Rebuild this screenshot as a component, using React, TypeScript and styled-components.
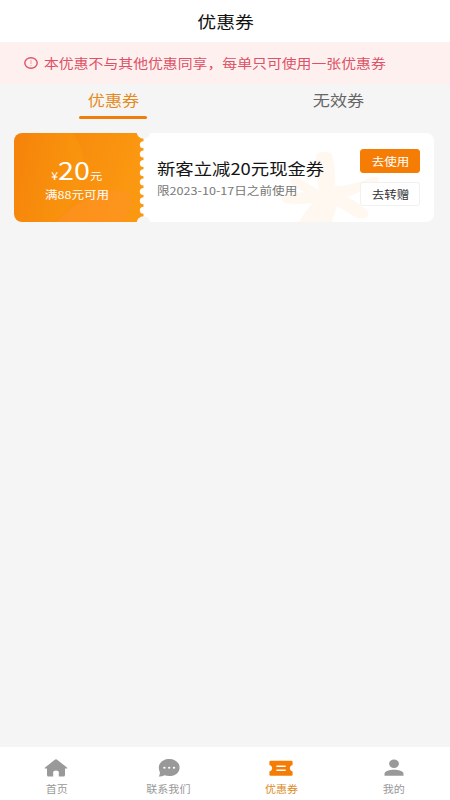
import React from 'react';
import styled, { createGlobalStyle } from 'styled-components';

const GlobalStyle = createGlobalStyle`
  * { box-sizing: border-box; }
  body { margin: 0; background: #f5f5f5; }
  button { font: inherit; cursor: pointer; }
`;

const Screen = styled.div`
  height: 800px;
  display: flex;
  flex-direction: column;
  background: #f5f5f5;
  font-family: 'Noto Sans CJK SC', sans-serif;
  overflow: hidden;
`;

/* Wide-set lettering shared by all labels */
const Label = styled.span<{ $stretch?: number; $origin?: string }>`
  display: inline-block;
  white-space: nowrap;
  transform: scaleX(${(p) => p.$stretch ?? 1.14});
  transform-origin: ${(p) => p.$origin ?? 'center'} center;
`;

const Header = styled.header`
  height: 42px;
  flex: none;
  display: flex;
  align-items: center;
  justify-content: center;
  background: #fff;
  color: #111;
  font-size: 16.4px;
  line-height: 24px;
  padding-left: 1px;
`;

const Notice = styled.div`
  height: 42px;
  flex: none;
  display: flex;
  align-items: center;
  gap: 6px;
  padding-left: 24px;
  background: #fff0f0;
  color: #dd5266;
  font-size: 13px;
  line-height: 20px;

  svg { flex: none; margin-bottom: 1px; }
`;

const Tabs = styled.nav`
  height: 48.5px;
  flex: none;
  display: grid;
  grid-template-columns: 1fr 1fr;
  justify-items: center;
  align-items: start;
`;

const Tab = styled.div<{ $active?: boolean }>`
  width: 68px;
  margin-left: 1px;
  padding-top: 4px;
  text-align: center;
  font-size: 15px;
  line-height: 24px;
  color: ${(p) => (p.$active ? '#e58a1c' : '#666')};

  span { margin-left: 1px; }

  &::after {
    content: '';
    display: block;
    height: 3px;
    margin-top: 3.5px;
    border-radius: 2px;
    background: ${(p) => (p.$active ? '#f07e0c' : 'transparent')};
  }
`;

const Card = styled.article`
  display: flex;
  height: 89px;
  margin: 0 16px 0 14px;
  border-radius: 8px;
  overflow: hidden;
  background: #fff;
`;

const Stub = styled.div`
  position: relative;
  z-index: 1;
  width: 130px;
  flex: none;
  display: flex;
  flex-direction: column;
  align-items: center;
  padding: 23.5px 4px 0 0;
  color: #fff;
`;

const StubArt = styled.svg`
  position: absolute;
  inset: 0;
  overflow: visible;
`;

const Price = styled.div`
  height: 28px;
  display: flex;
  align-items: baseline;
  line-height: 28px;
`;

const Amount = styled.span`
  font-size: 24.5px;
`;

const Unit = styled.span`
  font-size: 10.5px;
`;

const Condition = styled.div`
  position: relative;
  margin-top: 2px;
  font-size: 11px;
  line-height: 16px;
`;

const Body = styled.div`
  position: relative;
  flex: 1;
  display: flex;
  justify-content: space-between;
  padding: 16px 14px 0 13px;
`;

const Watermark = styled.svg`
  position: absolute;
  left: 131px;
  top: 0;
`;

const Info = styled.div`
  position: relative;
  display: flex;
  flex-direction: column;
  align-items: flex-start;
  padding-top: 7.5px;
`;

const CouponTitle = styled.div`
  font-size: 16px;
  line-height: 24px;
  color: #151515;
`;

const Expiry = styled.div`
  font-size: 11px;
  line-height: 16px;
  margin-top: 1.5px;
  color: #777;
`;

const Actions = styled.div`
  position: relative;
  display: flex;
  flex-direction: column;
  gap: 9px;
`;

const ActionButton = styled.button<{ $primary?: boolean }>`
  width: 60px;
  height: 24px;
  padding: 0;
  border-radius: 3px;
  border: 1px solid ${(p) => (p.$primary ? '#f57d05' : '#f1f1f1')};
  background: ${(p) => (p.$primary ? '#f57d05' : '#fff')};
  color: ${(p) => (p.$primary ? '#fff' : '#333')};
  font-size: 11px;
  line-height: 22px;
`;

const BottomBar = styled.footer`
  height: 53px;
  flex: none;
  margin-top: auto;
  display: grid;
  grid-template-columns: repeat(4, 1fr);
  background: #fff;
`;

const NavItem = styled.a<{ $active?: boolean }>`
  display: flex;
  flex-direction: column;
  align-items: center;
  padding-top: 12px;
  color: ${(p) => (p.$active ? '#f57d05' : '#999')};
  font-size: 9.7px;
  line-height: 14px;

  svg { display: block; margin-bottom: 3px; }
  span { color: ${(p) => (p.$active ? '#dc8b25' : '#999')}; }
`;

const BITES = Array.from({ length: 8 }, (_, i) => 11.7 + i * 9.35);

const StubBackground = () => (
  <StubArt width="130" height="89" viewBox="0 0 130 89">
    <defs>
      <linearGradient id="stub" x1="0" y1="0" x2="1" y2="0.25">
        <stop offset="0" stopColor="#f5820a" />
        <stop offset="1" stopColor="#fb9811" />
      </linearGradient>
      <linearGradient id="arc" x1="0" y1="0" x2="1" y2="0">
        <stop offset="0" stopColor="#f8930a" stopOpacity="0" />
        <stop offset="1" stopColor="#fa990d" stopOpacity=".6" />
      </linearGradient>
    </defs>
    <rect width="129.5" height="89" fill="url(#stub)" />
    <path d="M0 0H59Q72 20 69 42Q62 75 38 89H0Z" fill="url(#arc)" />
    <path d="M42 89Q60 68 90 59Q105 55 116 62Q122 75 108 89Z" fill="#ff9128" opacity=".5" />
    {BITES.map((y) => (
      <ellipse key={y} cx="129.6" cy={y} rx="3.8" ry="3.5" fill="#fff" />
    ))}
    <circle cx="129.5" cy="-1" r="6.8" fill="#f5f5f5" />
    <circle cx="129.5" cy="90" r="6.8" fill="#f5f5f5" />
  </StubArt>
);

const AlertIcon = () => (
  <svg width="14" height="12" viewBox="0 0 14 12" fill="none" stroke="#dd5266">
    <ellipse cx="7" cy="6" rx="6.2" ry="5.2" strokeWidth="1.4" />
    <path d="M7 3V7M7 8V9" strokeWidth="1" opacity=".5" />
  </svg>
);

const HomeIcon = () => (
  <svg width="24" height="20" viewBox="0 0 24 20" fill="currentColor">
    <path d="M11.2 .6Q12 0 12.8 .6L23 8.4Q24 9.6 22.5 9.6H21V16Q21 17.5 19.4 17.5H14.8V13Q14.8 11.4 12 11.4T9.2 13V17.5H4.6Q3 17.5 3 16V9.6H1.5Q0 9.6 1 8.4Z" />
  </svg>
);

const ChatIcon = () => (
  <svg width="24" height="20" viewBox="0 0 24 20">
    <path d="M12.3 0C18.3 0 22.6 3.8 22.6 8.7S18.3 17 12.3 17Q9.7 17 7.6 16.2Q5.2 17.6 1.7 17.5Q3 16 2.9 13.2Q1.8 11.2 1.8 8.7C1.8 3.8 6.3 0 12.3 0Z" fill="currentColor" />
    <g fill="#fff">
      <ellipse cx="7.4" cy="8.8" rx="1.2" ry="1" />
      <ellipse cx="12.2" cy="8.8" rx="1.2" ry="1" />
      <ellipse cx="17" cy="8.8" rx="1.2" ry="1" />
    </g>
  </svg>
);

const TicketIcon = () => (
  <svg width="24" height="20" viewBox="0 0 24 20">
    <path d="M1.6 1.8H22.4Q23.6 1.8 23.6 2.9V6C19.9 6.6 19.9 12 23.6 12.6V15.7Q23.6 16.8 22.4 16.8H1.6Q.4 16.8 .4 15.7V12.6C4.1 12 4.1 6.6 .4 6V2.9Q.4 1.8 1.6 1.8Z" fill="currentColor" />
    <path d="M7.9 7.2H16.2M7.9 11.3H16.2" stroke="#fff" strokeWidth="1.4" strokeLinecap="round" />
  </svg>
);

const UserIcon = () => (
  <svg width="24" height="20" viewBox="0 0 24 20" fill="currentColor">
    <ellipse cx="12" cy="4.8" rx="4.9" ry="4.2" />
    <path d="M2.5 16.8V14.7C2.5 12.1 7.8 10.8 12 10.8S21.5 12.1 21.5 14.7V16.8Z" />
  </svg>
);

const NAV = [
  { label: '首页', Icon: HomeIcon },
  { label: '联系我们', Icon: ChatIcon },
  { label: '优惠券', Icon: TicketIcon, active: true },
  { label: '我的', Icon: UserIcon },
];

export default function App() {
  return (
    <Screen>
      <GlobalStyle />
      <Header><Label $stretch={1.15}>优惠券</Label></Header>
      <Notice>
        <AlertIcon />
        <Label $origin="left" $stretch={1.143}>本优惠不与其他优惠同享，每单只可使用一张优惠券</Label>
      </Notice>
      <Tabs>
        <Tab $active><Label>优惠券</Label></Tab>
        <Tab><Label>无效券</Label></Tab>
      </Tabs>
      <Card>
        <Stub>
          <StubBackground />
          <Label $stretch={1.17}>
            <Price><Unit>¥</Unit><Amount>20</Amount><Unit>元</Unit></Price>
          </Label>
          <Condition><Label>满88元可用</Label></Condition>
        </Stub>
        <Body>
          <Watermark width="112" height="89" viewBox="0 0 112 89">
            <path
              d="M41 21Q49 16 57 21Q61 38 60 53Q72 54 98 44Q107 43 103 49Q90 58 72 64Q88 72 94 80Q92 88 82 85L62 73L57 89H24Q30 78 38 70Q24 72 10 70Q3 66 10 61L30 59Q16 54 15 47Q20 41 27 47L44 57Q40 36 41 21Z"
              fill="#fff8f0"
            />
          </Watermark>
          <Info>
            <CouponTitle><Label $origin="left" $stretch={1.147}>新客立减20元现金券</Label></CouponTitle>
            <Expiry><Label $origin="left" $stretch={1.145}>限2023-10-17日之前使用</Label></Expiry>
          </Info>
          <Actions>
            <ActionButton $primary><Label>去使用</Label></ActionButton>
            <ActionButton><Label>去转赠</Label></ActionButton>
          </Actions>
        </Body>
      </Card>
      <BottomBar>
        {NAV.map(({ label, Icon, active }) => (
          <NavItem key={label} $active={active}>
            <Icon />
            <Label>{label}</Label>
          </NavItem>
        ))}
      </BottomBar>
    </Screen>
  );
}
